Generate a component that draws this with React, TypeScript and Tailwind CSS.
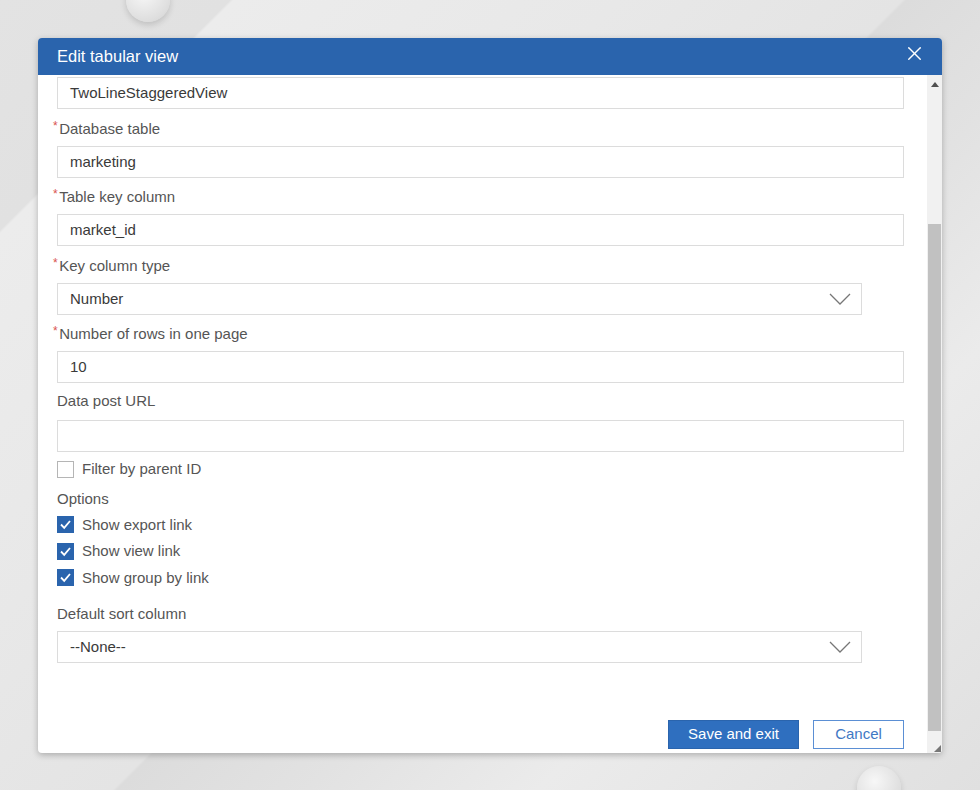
import { X } from "lucide-react";

const Chevron = () => (
  <svg width="22" height="12" viewBox="0 0 22 12" className="text-[#777]">
    <polyline points="1,1 11,11 21,1" fill="none" stroke="currentColor" strokeWidth="1.3" />
  </svg>
);

const Label = ({ text, required }: { text: string; required?: boolean }) => (
  <div className={`flex items-start h-5 text-[15px] leading-5 text-[#555] ${required ? "-ml-[4px]" : ""}`}>
    {required && <span className="text-[#d9534f] text-[12px] leading-[14px] mr-[1.5px]">*</span>}
    <span>{text}</span>
  </div>
);

const Input = ({ value, className = "" }: { value: string; className?: string }) => (
  <div className={`h-[32px] border border-[#dcdcdc] bg-white px-3 flex items-center text-[15px] text-[#3a3a3a] ${className}`}>
    {value}
  </div>
);

const Select = ({ value, className = "" }: { value: string; className?: string }) => (
  <div className={`h-[32px] w-[805px] border border-[#dcdcdc] bg-white pl-3 pr-[10px] flex items-center justify-between text-[15px] text-[#3a3a3a] ${className}`}>
    <span>{value}</span>
    <Chevron />
  </div>
);

const Check = ({ label, checked }: { label: string; checked?: boolean }) => (
  <div className="flex items-center h-[26.5px] text-[15px] text-[#555]">
    {checked ? (
      <span className="w-[17px] h-[17px] bg-[#2a64ad] flex items-center justify-center mr-[8px]">
        <svg width="13" height="13" viewBox="0 0 13 13">
          <polyline points="2,6.5 5.2,9.8 11,3" fill="none" stroke="white" strokeWidth="1.8" />
        </svg>
      </span>
    ) : (
      <span className="w-[17px] h-[17px] border border-[#b5b5b5] bg-white mr-[8px]" />
    )}
    <span>{label}</span>
  </div>
);

export default function App() {
  return (
    <div
      className="relative w-full h-[790px] overflow-hidden pt-[38px] pl-[38px] bg-[linear-gradient(135deg,#e3e3e3_0%,#e1e1e1_13%,#ececec_13.2%,#e8e8e8_35%,#e4e4e4_51%,#dcdcdc_51.2%,#e2e2e2_62%,#ebebeb_75%,#e0e0e0_100%)]"
      style={{ fontFamily: '"Liberation Sans", Arial, sans-serif' }}
    >
      <div className="absolute left-[126px] -top-[22px] w-[44px] h-[44px] rounded-full bg-[radial-gradient(circle_at_40%_35%,#f7f7f7,#dedede_70%,#cfcfcf)] shadow-[0_3px_6px_rgba(0,0,0,0.15)]" />
      <div className="absolute left-[857px] top-[766px] w-[44px] h-[44px] rounded-full bg-[radial-gradient(circle_at_40%_35%,#f7f7f7,#dedede_70%,#cfcfcf)] shadow-[0_3px_6px_rgba(0,0,0,0.15)]" />

      <div className="relative w-[904px] h-[715px] bg-white rounded-[4px] shadow-[0_2px_6px_rgba(0,0,0,0.25)] flex flex-col overflow-hidden">
        <div className="h-[37px] bg-[#2a64ad] flex items-center justify-between pl-[19px] pr-[16px] shrink-0">
          <span className="text-white text-[16.5px]">Edit tabular view</span>
          <X size={23} strokeWidth={1.5} className="text-white -mt-[7px]" />
        </div>

        <div className="flex flex-1 min-h-0">
          <div className="flex-1 pl-[19px] pr-[23px] pt-[2px]">
            <Input value="TwoLineStaggeredView" />
            <div className="mt-[10px]"><Label text="Database table" required /></div>
            <Input value="marketing" className="mt-[7px]" />
            <div className="mt-[9px]"><Label text="Table key column" required /></div>
            <Input value="market_id" className="mt-[7px]" />
            <div className="mt-[10px]"><Label text="Key column type" required /></div>
            <Select value="Number" className="mt-[7px]" />
            <div className="mt-[9px]"><Label text="Number of rows in one page" required /></div>
            <Input value="10" className="mt-[7px]" />
            <div className="mt-[8px]"><Label text="Data post URL" /></div>
            <Input value="" className="mt-[9px]" />
            <div className="mt-[4px]"><Check label="Filter by parent ID" /></div>
            <div className="h-5 leading-5 text-[15px] text-[#555] mt-[6px]">Options</div>
            <div className="mt-[3px]">
              <Check label="Show export link" checked />
              <Check label="Show view link" checked />
              <Check label="Show group by link" checked />
            </div>
            <div className="mt-[13px]"><Label text="Default sort column" /></div>
            <Select value="--None--" className="mt-[7px]" />
            <div className="flex justify-end gap-[14px] mt-[57px]">
              <button className="w-[131px] h-[29px] bg-[#2f6fbf] border border-[#2a64ad] text-white text-[15px]">Save and exit</button>
              <button className="w-[91px] h-[29px] bg-white border border-[#5b8fd4] text-[#3f78c4] text-[15px]">Cancel</button>
            </div>
          </div>

          <div className="relative w-[15px] bg-[#f1f1f1] flex flex-col shrink-0">
            <div className="h-[18px] flex items-center justify-center">
              <svg width="8" height="5" viewBox="0 0 8 5"><polygon points="0,5 4,0 8,5" fill="#505050" /></svg>
            </div>
            <div className="h-[131px]" />
            <div className="mx-[1px] h-[507px] bg-[#c1c1c1]" />
            <div className="flex-1 flex items-end justify-end pr-[1px] pb-[1px]">
              <svg width="7" height="7" viewBox="0 0 7 7"><polygon points="7,0 7,7 0,7" fill="#777" /></svg>
            </div>
          </div>
        </div>
      </div>
    </div>
  );
}
